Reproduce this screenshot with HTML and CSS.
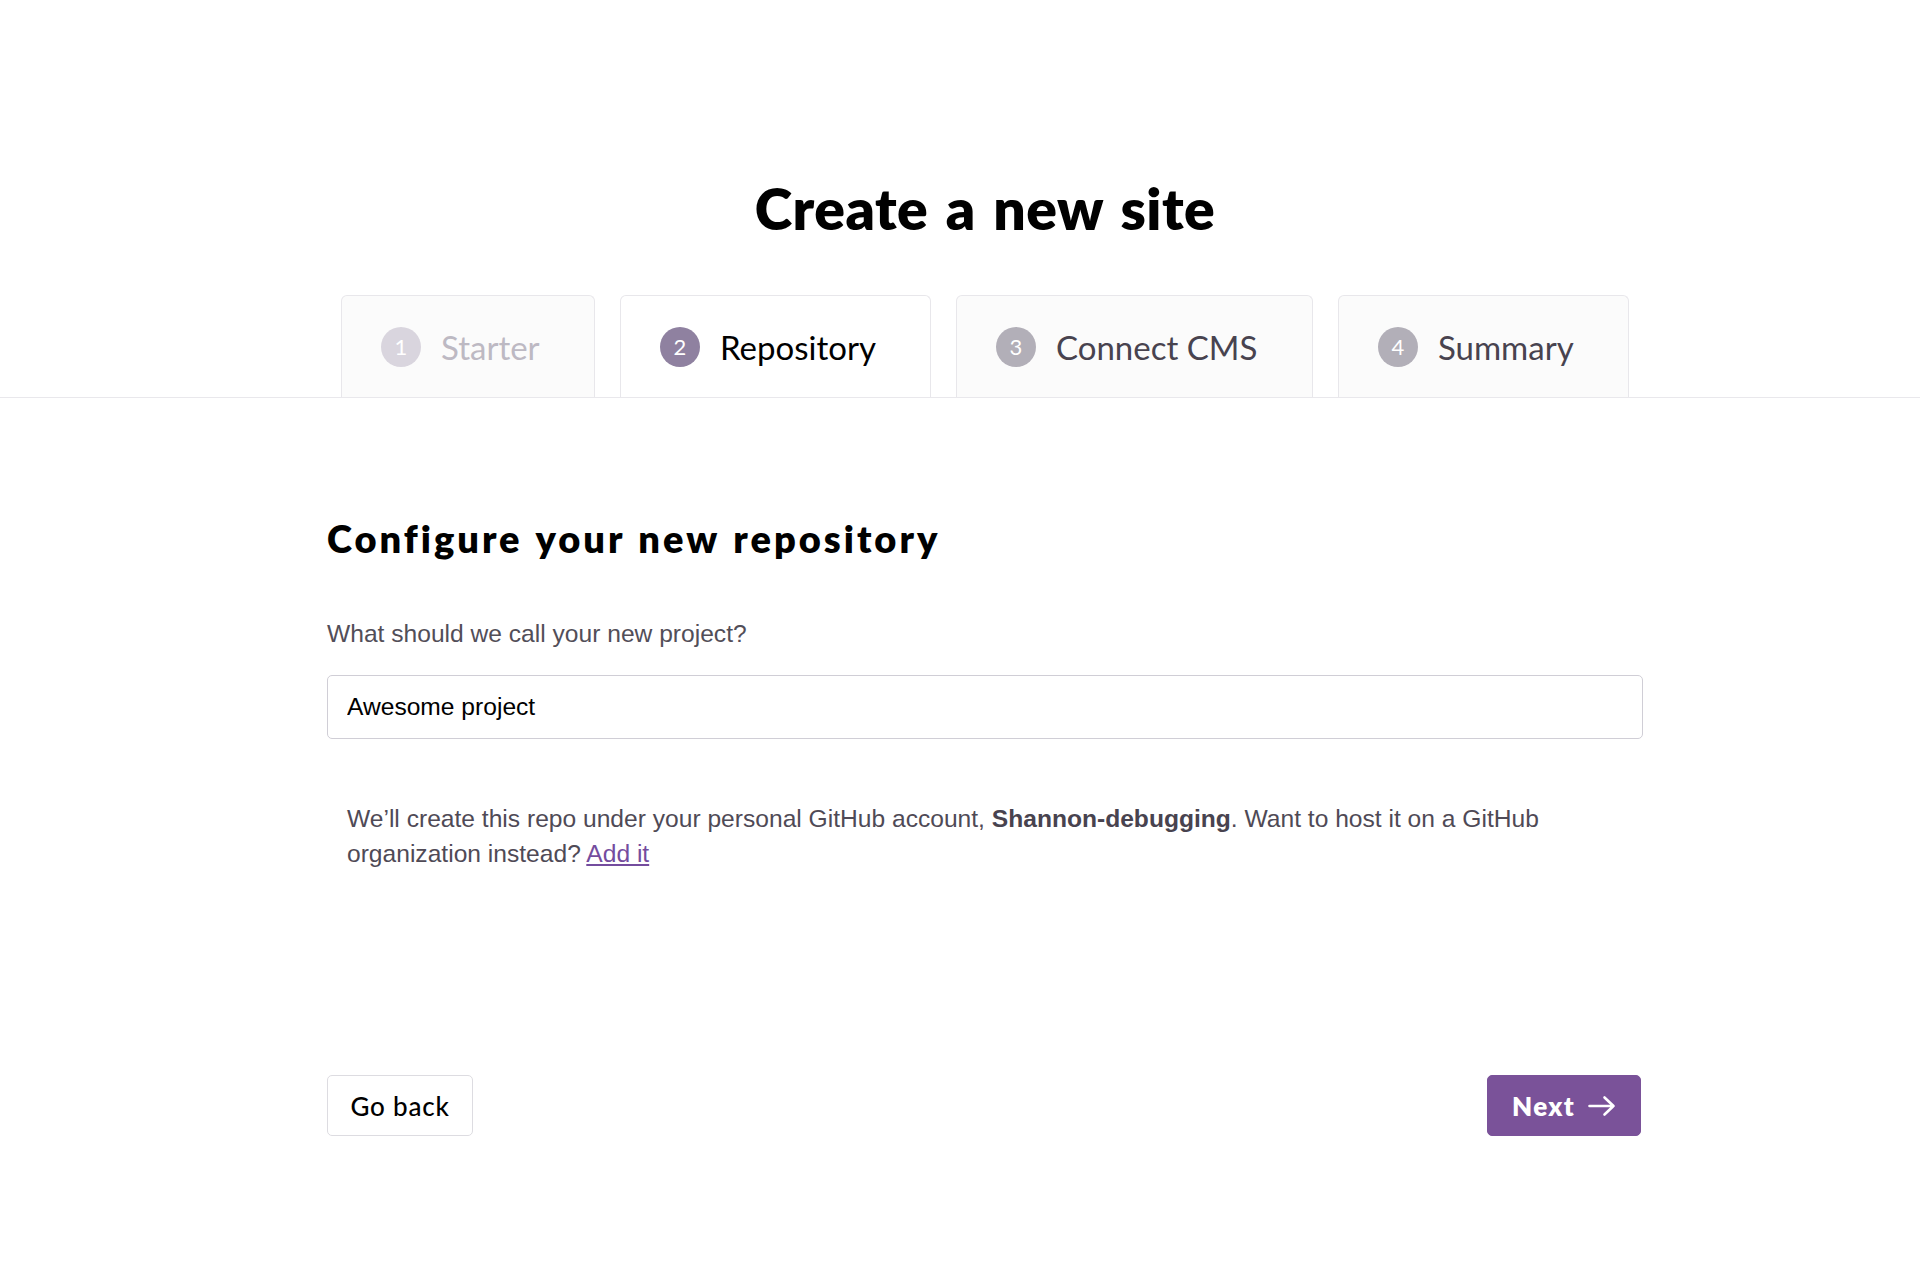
FILE: index.html
```html
<!DOCTYPE html>
<html lang="en">
<head>
<meta charset="utf-8">
<title>Create a new site</title>
<link rel="stylesheet" href="styles.css">
</head>
<body>
<header class="top">
  <h1 class="title">Create a new site</h1>
</header>
<nav class="steps">
  <div class="steps-row">
    <div class="step step-done step-starter"><span class="step-num">1</span><span class="step-label">Starter</span></div>
    <div class="step step-active step-repo"><span class="step-num">2</span><span class="step-label">Repository</span></div>
    <div class="step step-todo step-cms"><span class="step-num">3</span><span class="step-label">Connect CMS</span></div>
    <div class="step step-todo step-summary"><span class="step-num">4</span><span class="step-label">Summary</span></div>
  </div>
</nav>
<main class="content">
  <div class="container">
    <h2 class="heading">Configure your new repository</h2>
    <label class="field-label" for="project">What should we call your new project?</label>
    <input id="project" class="field-input" type="text" value="Awesome project">
    <p class="note">We’ll create this repo under your personal GitHub account, <strong>Shannon-debugging</strong>. Want to host it on a GitHub organization instead? <a class="note-link" href="#">Add it</a></p>
    <div class="actions">
      <button class="btn btn-secondary" type="button">Go back</button>
      <button class="btn btn-primary" type="button">Next <svg class="btn-arrow" viewBox="0 0 28 22" width="28" height="22" aria-hidden="true"><path d="M1.5 11H25.5M16.5 2.5L25.5 11L16.5 19.5" fill="none" stroke="currentColor" stroke-width="2.6" stroke-linecap="round" stroke-linejoin="round"/></svg></button>
    </div>
  </div>
</main>
</body>
</html>
```

FILE: styles.css
```css
html, body {
  margin: 0;
  padding: 0;
  background: #ffffff;
}

body {
  font-family: "Liberation Sans", Arial, sans-serif;
  color: #000;
}

.top {
  padding-left: 50px;
  padding-top: 180px;
  text-align: center;
}

.title {
  margin: 0;
  font-family: "Lato", "Liberation Sans", sans-serif;
  font-weight: 800;
  font-size: 57px;
  line-height: 56px;
  letter-spacing: 0.45px;
  word-spacing: 4px;
  color: #000;
}

.steps {
  margin-top: 59px;
  padding-left: 50px;
  border-bottom: 1px solid #e9e8ec;
}

.steps-row {
  display: flex;
  justify-content: center;
  gap: 25px;
}

.step {
  box-sizing: border-box;
  height: 102px;
  display: flex;
  align-items: center;
  gap: 20px;
  padding-left: 39px;
  background: #fbfbfb;
  border: 1px solid #e8e7eb;
  border-bottom: none;
  border-radius: 6px 6px 0 0;
  font-family: "Lato", "Liberation Sans", sans-serif;
  font-size: 33px;
  font-weight: 400;
  color: #48434f;
}

.step-starter { width: 254px; }
.step-repo { width: 311px; }
.step-cms { width: 357px; }
.step-summary { width: 291px; }

.step-num {
  width: 40px;
  height: 40px;
  border-radius: 50%;
  display: flex;
  align-items: center;
  justify-content: center;
  font-size: 22px;
  color: #fff;
  background: #b2afb8;
  flex: none;
}

.step-done {
  color: #bdb9c3;
}

.step-done .step-num {
  background: #d9d5de;
}

.step-active {
  background: #fff;
  color: #000;
}

.step-active .step-num {
  background: #8f81a0;
}

.content {
  padding-left: 50px;
  padding-top: 119px;
}

.container {
  width: 1316px;
  margin: 0 auto;
}

.heading {
  margin: 0;
  font-family: "Lato", "Liberation Sans", sans-serif;
  font-weight: 800;
  font-size: 38px;
  line-height: 42px;
  letter-spacing: 3px;
  word-spacing: 2px;
  color: #000;
}

.field-label {
  display: block;
  margin-top: 57px;
  font-size: 24.6px;
  line-height: 35px;
  color: #524e58;
}

.field-input {
  display: block;
  box-sizing: border-box;
  width: 100%;
  height: 64px;
  margin: 24px 0 0;
  padding: 0 19px;
  border: 1px solid #d0ced6;
  border-radius: 5px;
  font-family: "Liberation Sans", Arial, sans-serif;
  font-size: 24.6px;
  color: #000;
  background: #fff;
  outline: none;
}

.note {
  margin: 62px 0 0;
  padding: 0 20px;
  font-size: 24.6px;
  line-height: 35px;
  color: #4f4a56;
}

.note strong {
  font-weight: 700;
  color: #48434f;
}

.note-link {
  color: #744c9e;
  text-decoration: underline;
}

.actions {
  display: flex;
  justify-content: space-between;
  align-items: center;
  margin-top: 204px;
  padding-right: 2px;
}

.btn {
  box-sizing: border-box;
  height: 61px;
  display: inline-flex;
  align-items: center;
  justify-content: center;
  gap: 13px;
  padding: 0 18px;
  border-radius: 5px;
  font-family: "Lato", "Liberation Sans", sans-serif;
  font-size: 26px;
  cursor: pointer;
}

.btn-secondary {
  width: 146px;
  background: #fff;
  border: 1px solid #dddce1;
  color: #000;
  font-weight: 500;
  letter-spacing: 0.8px;
}

.btn-primary {
  width: 154px;
  background: #7a5299;
  border: 1px solid #7a5299;
  color: #fff;
  font-weight: 800;
  letter-spacing: 1.3px;
}

.btn-arrow {
  display: block;
  flex: none;
}
```
